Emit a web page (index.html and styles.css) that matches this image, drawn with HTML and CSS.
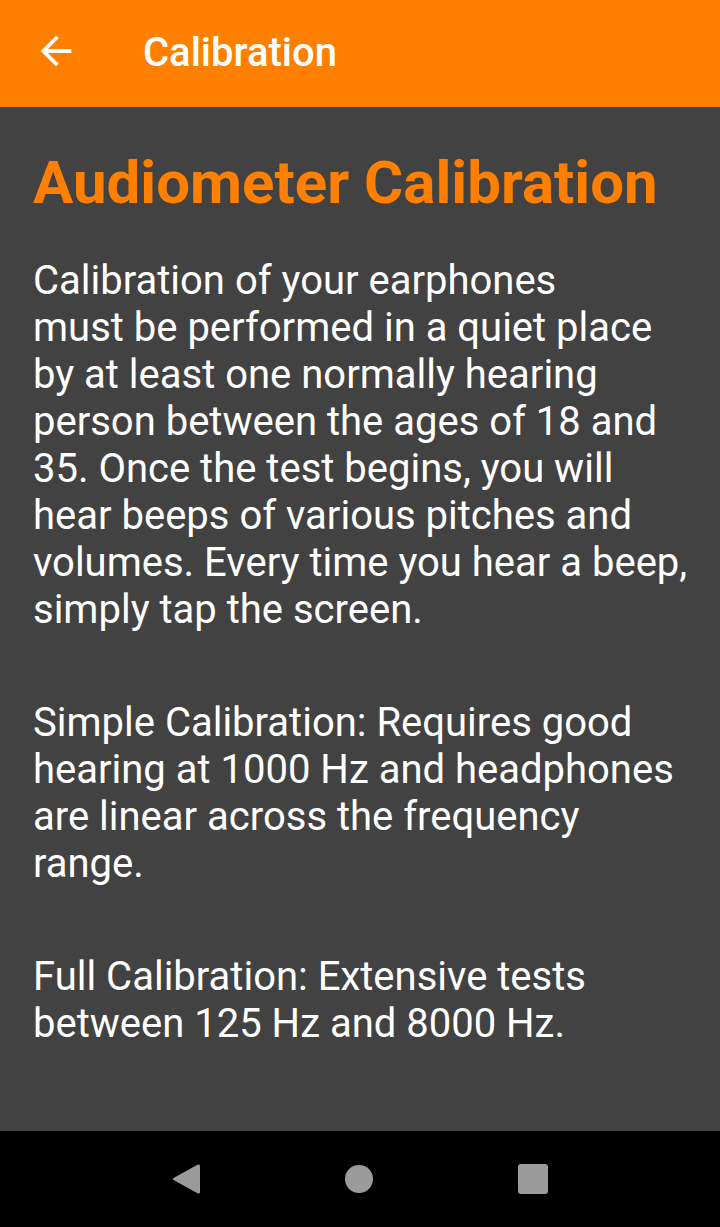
FILE: index.html
```html
<!DOCTYPE html>
<html>
<head>
<meta charset="utf-8">
<link rel="stylesheet" href="styles.css">
</head>
<body>
<div class="screen">
  <header class="toolbar">
    <svg class="back" viewBox="0 0 24 24" aria-hidden="true"><path d="M20 11H7.83l5.59-5.59L12 4l-8 8 8 8 1.41-1.41L7.83 13H20v-2z" fill="#fff"/></svg>
    <span class="toolbar-title">Calibration</span>
  </header>
  <main class="content">
    <h1 class="heading">Audiometer Calibration</h1>
    <p class="para">Calibration of your earphones<br>must be performed in a quiet place by at least one normally hearing person between the ages of 18 and 35. Once the test begins, you will hear beeps of various pitches and volumes. Every time you hear a beep, simply tap the screen.</p>
    <p class="para">Simple Calibration: Requires good hearing at 1000 Hz and headphones are linear across the frequency range.</p>
    <p class="para">Full Calibration: Extensive tests between 125 Hz and 8000 Hz.</p>
  </main>
  <nav class="navbar">
    <svg class="nav-back" viewBox="0 0 28 32"><path d="M26 1.5 Q28 1 28 3 V29 Q28 31 26 30.5 L1.5 17 Q0 16 1.5 15 Z" fill="#9b9b9b"/></svg>
    <span class="nav-home"></span>
    <span class="nav-recent"></span>
  </nav>
</div>
</body>
</html>
```

FILE: styles.css
```css
html, body {
  margin: 0;
  padding: 0;
}
body {
  font-family: Roboto, "Liberation Sans", sans-serif;
  background: #424242;
}
.screen {
  width: 720px;
  height: 1227px;
  display: flex;
  flex-direction: column;
  overflow: hidden;
}
.toolbar {
  height: 107px;
  flex: 0 0 107px;
  background: #ff8000;
  display: flex;
  align-items: center;
  box-sizing: border-box;
  padding-bottom: 6px;
}
.back {
  width: 46px;
  height: 46px;
  margin-left: 33px;
}
.toolbar-title {
  margin-left: 64px;
  margin-top: 4px;
  color: #fff;
  font-size: 40px;
  font-weight: 500;
}
.content {
  flex: 1;
  background: #424242;
  padding: 40px 26px 0 33px;
}
.heading {
  margin: 0 0 38px 0;
  font-size: 60px;
  line-height: 72px;
  font-weight: 700;
  color: #ff8000;
}
.para {
  margin: 0;
  font-size: 40px;
  line-height: 47px;
  color: #fff;
}
.para + .para {
  margin-top: 66px;
}
.navbar {
  flex: 0 0 96px;
  height: 96px;
  background: #000;
  display: flex;
  align-items: center;
  justify-content: center;
  gap: 145px;
}
.nav-back {
  width: 28px;
  height: 32px;
}
.nav-home {
  width: 28px;
  height: 28px;
  border-radius: 50%;
  background: #9b9b9b;
}
.nav-recent {
  width: 30px;
  height: 30px;
  border-radius: 3px;
  background: #9b9b9b;
}
```
